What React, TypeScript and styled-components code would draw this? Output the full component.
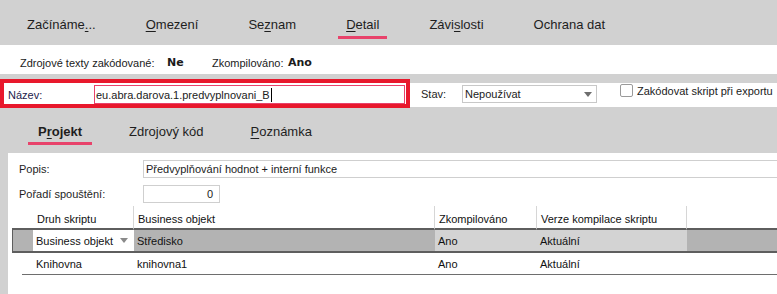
import styled, { createGlobalStyle } from 'styled-components';

const GlobalStyle = createGlobalStyle`
  html, body {
    margin: 0;
    padding: 0;
    background: #ffffff;
  }
  body {
    width: 777px;
    height: 294px;
    overflow: hidden;
    font-family: 'Liberation Sans', Arial, sans-serif;
    color: #1b1b1b;
  }
`;

const GRAY = '#d1d1d1';
const ACCENT = '#e8436b';
const BOX_RED = '#e8182c';
const ROW_DARK = '#b3b3b3';
const ROW_LIGHT = '#d3d3d3';

const Page = styled.div`
  width: 777px;
  height: 294px;
  display: flex;
  flex-direction: column;
  background: ${GRAY};
  overflow: hidden;
`;

const TabBar = styled.nav<{ $height: number; $pad: number; $gap: number }>`
  height: ${(p) => p.$height}px;
  flex: none;
  display: flex;
  align-items: stretch;
  gap: ${(p) => p.$gap}px;
  padding-left: ${(p) => p.$pad}px;
`;

const Tab = styled.div<{ $active?: boolean; $pad: number; $line: number; $bold?: boolean }>`
  position: relative;
  display: flex;
  align-items: center;
  padding: 3px ${(p) => p.$pad}px 0;
  font-size: 13px;
  font-weight: ${(p) => (p.$bold ? 700 : 400)};
  color: #1e1e1e;
  white-space: nowrap;

  &::after {
    content: '';
    position: absolute;
    left: 0;
    right: 0;
    top: ${(p) => p.$line}px;
    height: 3px;
    background: ${(p) => (p.$active ? ACCENT : 'transparent')};
  }
`;

const Key = styled.span`
  text-decoration: underline;
  text-underline-offset: 2px;
`;

const InfoRow = styled.div`
  height: 29px;
  flex: none;
  background: #ffffff;
  display: flex;
  align-items: center;
  padding: 6px 0 0 20px;
  box-sizing: border-box;
  font-size: 11px;
`;

const InfoLabel = styled.span<{ $w: number }>`
  width: ${(p) => p.$w}px;
  white-space: nowrap;
`;

const InfoValue = styled.b<{ $w: number }>`
  width: ${(p) => p.$w}px;
  font-family: 'DejaVu Sans', sans-serif;
  font-size: 11px;
`;

const NameRow = styled.div`
  margin-top: 9px;
  height: 24px;
  flex: none;
  background: #ffffff;
  display: flex;
  align-items: flex-start;
  padding-top: 2px;
  box-sizing: border-box;
  font-size: 11px;
`;

const NameGroup = styled.div`
  position: relative;
  width: 410px;
  flex: none;
  display: flex;
  align-items: center;
  padding-left: 8px;
  box-sizing: border-box;

  &::after {
    content: '';
    position: absolute;
    left: 0;
    top: -6px;
    width: 410px;
    height: 29px;
    border: 4px solid ${BOX_RED};
    box-sizing: border-box;
    pointer-events: none;
  }
`;

const FieldLabel = styled.span<{ $w: number; $navy?: boolean }>`
  width: ${(p) => p.$w}px;
  flex: none;
  white-space: nowrap;
  color: ${(p) => (p.$navy ? '#1c1c4c' : '#1e1e1e')};
`;

const NameInput = styled.div`
  width: 311px;
  height: 19px;
  border: 1px solid ${ACCENT};
  box-sizing: border-box;
  display: flex;
  align-items: center;
  padding-left: 1px;
  font-size: 11px;
  background: #ffffff;
`;

const Caret = styled.span`
  width: 1px;
  height: 14px;
  margin-left: 1px;
  background: #000000;
`;

const StavGroup = styled.div`
  display: flex;
  align-items: center;
  padding-left: 11px;
`;

const Select = styled.div`
  width: 135px;
  height: 18px;
  border: 1px solid #c8c8c8;
  box-sizing: border-box;
  display: flex;
  align-items: center;
  justify-content: space-between;
  padding: 0 4px 0 2px;
  background: #ffffff;
`;

const Arrow = styled.span<{ $color?: string }>`
  width: 0;
  height: 0;
  border-left: 4px solid transparent;
  border-right: 4px solid transparent;
  border-top: 5px solid ${(p) => p.$color ?? '#6e6e6e'};
`;

const CheckGroup = styled.label`
  display: flex;
  align-items: center;
  gap: 4px;
  margin-left: 23px;
  margin-top: -1px;
  white-space: nowrap;
`;

const CheckBox = styled.span`
  width: 13px;
  height: 13px;
  border: 1px solid #9a9a9a;
  border-radius: 2px;
  box-sizing: border-box;
  background: #ffffff;
`;

const Panel = styled.div`
  flex: 1;
  margin-left: 8px;
  background: #ffffff;
  padding: 7px 0 0 4px;
  display: flex;
  flex-direction: column;
  font-size: 11px;
`;

const FormRow = styled.div`
  display: flex;
  align-items: center;
  height: 18px;
  padding-left: 7px;
  margin-bottom: 7px;
`;

const TextBox = styled.div<{ $w?: number; $right?: boolean }>`
  ${(p) => (p.$w ? `width: ${p.$w}px;` : 'flex: 1; margin-right: -4px;')}
  height: 18px;
  border: 1px solid #cfcfcf;
  box-sizing: border-box;
  display: flex;
  align-items: center;
  justify-content: ${(p) => (p.$right ? 'flex-end' : 'flex-start')};
  padding: 0 6px 0 2px;
`;

const Grid = styled.div`
  margin-top: -4px;
  display: grid;
  grid-template-columns: 21px 101px 301px 102px 150px 1fr;
  font-size: 11px;
  color: #111111;
`;

const HeadCell = styled.div<{ $span?: number; $pad: number; $last?: boolean }>`
  grid-column: span ${(p) => p.$span ?? 1};
  height: 18px;
  display: flex;
  align-items: center;
  padding: 4px 0 0 ${(p) => p.$pad}px;
  border-right: ${(p) => (p.$last ? 'none' : '1px solid #d6d6d6')};
  border-bottom: 2px solid #5e5e5e;
  white-space: nowrap;
`;

const Cell = styled.div<{ $bg: string; $selected?: boolean; $edge?: boolean }>`
  height: 21px;
  display: flex;
  align-items: center;
  justify-content: space-between;
  padding: 0 6px 0 3px;
  background: ${(p) => p.$bg};
  border-bottom: ${(p) => (p.$selected ? '2px solid #5e5e5e' : '1px solid #6e6e6e')};
  border-left: ${(p) => (p.$edge ? '1px solid #5e5e5e' : 'none')};
  white-space: nowrap;
`;

const BlankCell = styled.div`
  height: 22px;
  background-image: linear-gradient(#6e6e6e, #6e6e6e);
  background-size: 11px 1px;
  background-position: right bottom;
  background-repeat: no-repeat;
`;

export default function App() {
  return (
    <Page>
      <GlobalStyle />
      <TabBar $height={45} $pad={19} $gap={34}>
        <Tab $pad={8} $line={36}>
          Začínáme<Key>.</Key>..
        </Tab>
        <Tab $pad={8} $line={36}>
          <Key>O</Key>mezení
        </Tab>
        <Tab $pad={8} $line={36}>
          Se<Key>z</Key>nam
        </Tab>
        <Tab $pad={8} $line={36} $active>
          <Key>D</Key>etail
        </Tab>
        <Tab $pad={8} $line={36}>
          Závi<Key>s</Key>losti
        </Tab>
        <Tab $pad={8} $line={36}>
          Ochrana dat
        </Tab>
      </TabBar>

      <InfoRow>
        <InfoLabel $w={147}>Zdrojové texty zakódované:</InfoLabel>
        <InfoValue $w={45}>Ne</InfoValue>
        <InfoLabel $w={76}>Zkompilováno:</InfoLabel>
        <InfoValue $w={40}>Ano</InfoValue>
      </InfoRow>

      <NameRow>
        <NameGroup>
          <FieldLabel $w={86} $navy>
            Název:
          </FieldLabel>
          <NameInput>
            eu.abra.darova.1.predvyplnovani_B
            <Caret />
          </NameInput>
        </NameGroup>
        <StavGroup>
          <FieldLabel $w={41}>Stav:</FieldLabel>
          <Select>
            Nepoužívat
            <Arrow />
          </Select>
        </StavGroup>
        <CheckGroup>
          <CheckBox />
          Zakódovat skript při exportu
        </CheckGroup>
      </NameRow>

      <TabBar $height={46} $pad={28} $gap={27}>
        <Tab $pad={10} $line={35} $active $bold>
          P<Key>r</Key>ojekt
        </Tab>
        <Tab $pad={10} $line={35}>
          Zdrojový kód
        </Tab>
        <Tab $pad={10} $line={35}>
          <Key>P</Key>oznámka
        </Tab>
      </TabBar>

      <Panel>
        <FormRow>
          <FieldLabel $w={124}>Popis:</FieldLabel>
          <TextBox>Předvyplňování hodnot + interní funkce</TextBox>
        </FormRow>
        <FormRow>
          <FieldLabel $w={124}>Pořadí spouštění:</FieldLabel>
          <TextBox $w={77} $right>
            0
          </TextBox>
        </FormRow>

        <Grid>
          <HeadCell $span={2} $pad={25}>
            Druh skriptu
          </HeadCell>
          <HeadCell $pad={4}>Business objekt</HeadCell>
          <HeadCell $pad={4}>Zkompilováno</HeadCell>
          <HeadCell $pad={4}>Verze kompilace skriptu</HeadCell>
          <HeadCell $pad={0} $last />

          <Cell $bg={ROW_DARK} $selected $edge />
          <Cell $bg="#ffffff" $selected>
            Business objekt
            <Arrow $color="#8a8a8a" />
          </Cell>
          <Cell $bg={ROW_DARK} $selected>
            Středisko
          </Cell>
          <Cell $bg={ROW_LIGHT} $selected>
            Ano
          </Cell>
          <Cell $bg={ROW_LIGHT} $selected>
            Aktuální
          </Cell>
          <Cell $bg={ROW_DARK} $selected />

          <BlankCell />
          <Cell $bg="#ffffff">Knihovna</Cell>
          <Cell $bg="#ffffff">knihovna1</Cell>
          <Cell $bg="#ffffff">Ano</Cell>
          <Cell $bg="#ffffff">Aktuální</Cell>
          <Cell $bg="#ffffff" />
        </Grid>
      </Panel>
    </Page>
  );
}
